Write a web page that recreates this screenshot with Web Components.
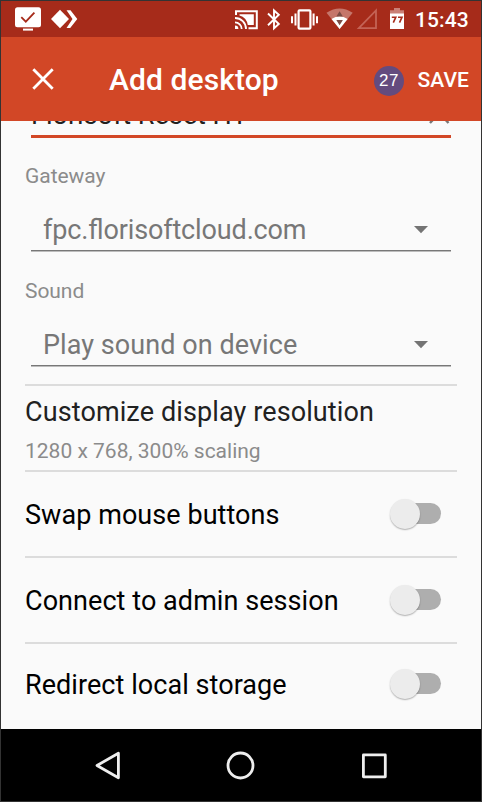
<!DOCTYPE html>
<html lang="en">
<head>
<meta charset="utf-8">
<title>Add desktop</title>
<style>
html,body{margin:0;height:100%}
body{font-family:Roboto,"Liberation Sans",sans-serif;background:#333}
</style>
</head>
<body>
<add-desktop-screen></add-desktop-screen>
<script>
function define(name, render) {
  customElements.define(name, class extends HTMLElement {
    connectedCallback() {
      if (this.shadowRoot) return;
      this.attachShadow({mode: 'open'}).innerHTML = render(this);
    }
  });
}

define('status-bar', () => `
<style>
:host{display:flex;height:36px;flex:none;background:#a62b1a;color:#fff}
svg{display:block;width:414px;height:36px;flex:none}
span{font:500 21px/36px Roboto,sans-serif;margin-top:1px;letter-spacing:.1px}
</style>
<svg viewBox="1 1 414 36">
  <rect x="15" y="7.3" width="26" height="20" rx="2.5" fill="#fff"/>
  <path d="M23 29.6h10" stroke="#fff" stroke-width="2"/>
  <path d="M21.3 17.2l4.5 4.5 8.6-9" fill="none" stroke="#a62b1a" stroke-width="1.8"/>
  <path d="M51 19l9-9.3 9 9.3-9 9.3z" fill="#fff"/>
  <path d="M66.5 10.2h4L77.3 19l-7.1 9h-3.7l6-9z" fill="#fff"/>
  <g fill="none" stroke="#fff">
    <path d="M236 15v-3.8h20.8v17h-8.3" stroke-width="2"/>
    <path d="M235 18a11 11 0 0 1 11 11M235 22.3a6.7 6.7 0 0 1 6.7 6.7" stroke-width="1.8"/>
    <path d="M268 13.5l10.8 10.5-4.8 4.3V10.5l4.8 4.3L268 25.3" stroke-width="1.9"/>
    <rect x="298.6" y="10.3" width="11.8" height="18.4" rx="1" stroke-width="2.2"/>
    <path d="M295.5 13.5v12M292 16.2v7M313.6 13.5v12M317 16.2v7" stroke-width="2"/>
  </g>
  <path d="M239.5 14.2h14.3v10.9h-6Q246.5 17.5 239.5 15.6z" fill="#fff"/>
  <path d="M235 25.6a3.4 3.4 0 0 1 3.4 3.4H235z" fill="#fff"/>
  <path d="M326.5 12.8Q339.6 4 352.7 12.8L339.6 29z" fill="#c5766b"/>
  <path d="M331.5 18.9Q339.6 13.8 347.6 18.9L339.6 29z" fill="#fff"/>
  <path d="M336.3 16.6L339.6 11.3l3.3 5.3zM336.3 20h6.6l-3.3 5.2z" fill="#7c4c45"/>
  <path d="M358.8 28.2L376 10.4v17.8z" fill="none" stroke="#c46356" stroke-width="1.8"/>
  <path d="M390 10.3h4V8h6v2.3h4V14h-14z" fill="#ca8076"/>
  <path d="M390 13.5h14V29h-14z" fill="#fff"/>
  <path d="M391.8 17.2h4l-2.5 5.5M398 17.2h4l-2.5 5.5" fill="none" stroke="#a62b1a" stroke-width="1.6"/>
</svg>
<span>15:43</span>`);

define('app-bar', () => `
<style>
:host{display:flex;align-items:center;height:84px;flex:none;background:#d24726;color:#fff;box-sizing:border-box;padding-left:30px}
svg{width:24px;height:24px;flex:none}
h1{margin:2px 0 0 54px;font:500 30px/40px Roboto,sans-serif;letter-spacing:.09px;flex:1;white-space:nowrap}
b{width:30px;height:30px;border-radius:50%;background:#644b7e;font:400 17px/30px "Liberation Sans",sans-serif;letter-spacing:.5px;text-align:center;margin:3px 13.5px 0 0}
span{font:500 21px/30px Roboto,sans-serif;letter-spacing:.1px;margin:2px 12px 0 0}
</style>
<svg viewBox="0 0 24 24"><path d="M2.3 2.3L21.7 21.7M21.7 2.3L2.3 21.7" stroke="#fff" stroke-width="2.8"/></svg>
<h1><slot></slot></h1><b>27</b><span>SAVE</span>`);

define('name-field', () => `
<style>
:host{display:flex;align-items:flex-end;justify-content:space-between;height:17px;flex:none;margin:0 6px;overflow:hidden;box-sizing:border-box;border-bottom:3px solid #d24726;color:#212121;font:27px/32px Roboto,sans-serif;white-space:nowrap}
span{margin-bottom:4px}
svg{width:24px;height:24px;margin-bottom:11px}
</style>
<span><slot></slot></span>
<svg viewBox="0 0 24 24"><path d="M3 3L21.5 23M21.5 3L3 23" stroke="#777" stroke-width="2.4"/></svg>`);

define('select-field', el => `
<style>
:host{display:block;height:115px;flex:none}
label{display:block;font:21px/26px Roboto,sans-serif;letter-spacing:-.05px;color:#8b8b8b;padding-top:25px}
div{display:flex;align-items:center;justify-content:space-between;height:42px;margin:20px 6px 0;padding:0 23px 0 12px;border-bottom:1px solid #777;box-shadow:0 1px #bcbcbc;color:#777;box-sizing:border-box;font:27px/32px Roboto,sans-serif;font-feature-settings:"liga";letter-spacing:var(--tracking,0)}
svg{width:14px;height:8px}
</style>
<label>${el.getAttribute('label')}</label>
<div><span><slot></slot></span><svg viewBox="0 0 14 8"><path d="M0 0h14L7 7.2z" fill="#747474"/></svg></div>`);

define('setting-item', el => `
<style>
:host{display:block;height:86px;flex:none;box-sizing:border-box;border-top:2px solid #dcdcdc;color:#212121}
div{font:27px/32px Roboto,sans-serif;letter-spacing:.11px;padding-top:10px}
p{margin:10px 0 0;font:21px/26px Roboto,sans-serif;color:#8b8b8b}
</style>
<div><slot></slot></div><p>${el.getAttribute('detail')}</p>`);

define('toggle-item', () => `
<style>
:host{display:flex;align-items:center;justify-content:space-between;height:86px;flex:none;box-sizing:border-box;border-top:2px solid #dcdcdc;color:#000;font:27px/32px Roboto,sans-serif;letter-spacing:.06px}
:host(:last-of-type){height:82px}
span{margin-top:2px}
i{display:flex;align-items:center;width:45px;height:21px;border-radius:11px;background:linear-gradient(90deg,transparent 15px,#aeaeae 15px);margin:-1px 16px 0 0}
i::before{content:"";width:30px;height:30px;flex:none;border-radius:50%;background:#ececec;margin-left:-6px;box-shadow:0 1px 1.5px rgba(0,0,0,.3)}
</style>
<span><slot></slot></span><i></i>`);

define('nav-bar', () => `
<style>
:host{display:flex;justify-content:space-between;align-items:center;height:72px;flex:none;background:#000;padding:0 92px 0 91px}
svg{width:30px;height:30px;fill:none;stroke:#eee;stroke-width:2.8;stroke-linejoin:round}
</style>
<svg viewBox="92 750 30 30"><path d="M97 765.5L118.4 753.2v24.6z"/></svg>
<svg viewBox="226 750 30 30"><circle cx="240.5" cy="765.5" r="12.5"/></svg>
<svg viewBox="359 750 30 30"><path d="M363.4 754.9h21.9v21.9h-21.9z"/></svg>`);

define('add-desktop-screen', () => `
<style>
:host{display:flex;flex-direction:column;width:482px;height:802px;box-sizing:border-box;border:1px solid #333;background:#fafafa;overflow:hidden}
main{display:flex;flex-direction:column;height:608px;flex:none;padding:0 24px;box-sizing:border-box;overflow:hidden}
.gap{height:16px;flex:none}
.host{--tracking:-.14px}
.sound{--tracking:.06px}
</style>
<status-bar></status-bar>
<app-bar>Add desktop</app-bar>
<main>
<name-field>Florisoft Reset HT</name-field>
<select-field class="host" label="Gateway">fpc.florisoftcloud.com</select-field>
<select-field class="sound" label="Sound">Play sound on device</select-field>
<div class="gap"></div>
<setting-item detail="1280 x 768, 300% scaling">Customize display resolution</setting-item>
<toggle-item>Swap mouse buttons</toggle-item>
<toggle-item>Connect to admin session</toggle-item>
<toggle-item>Redirect local storage</toggle-item>
</main>
<nav-bar></nav-bar>`);
</script>
</body>
</html>
